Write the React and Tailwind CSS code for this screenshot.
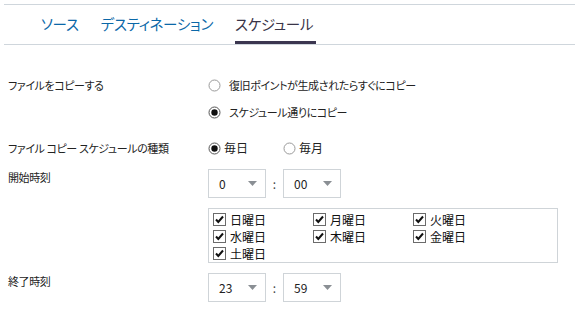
import { useState } from 'react';

const font = "font-['Noto_Sans_CJK_JP','Noto_Sans',sans-serif] [font-feature-settings:'palt']";

function Radio({ checked, label, onClick, small }) {
  return (
    <label className="flex items-center h-[24px] cursor-pointer" onClick={onClick}>
      <svg width="13" height="13" viewBox="0 0 13 13" className="shrink-0">
        <circle cx="6.5" cy="6.5" r="5.5" fill="#fff" stroke={checked ? '#555' : '#9a9a9a'} strokeWidth="1" />
        {checked && <circle cx="6.5" cy="6.5" r="3.2" fill="#111" />}
      </svg>
      <span className={`text-[#222] leading-none ${small ? 'ml-[8px] text-[11px] tracking-[-0.4px]' : 'ml-[3px] text-[12px]'}`}>{label}</span>
    </label>
  );
}

function Check({ label }) {
  return (
    <div className="flex items-center h-[17px] w-[100px]">
      <svg width="13" height="13" viewBox="0 0 13 13" className="shrink-0">
        <rect x="0.5" y="0.5" width="12" height="12" fill="#fff" stroke="#6b6b6b" />
        <path d="M3 6.5 L5.3 9 L10 3.5" fill="none" stroke="#111" strokeWidth="2" />
      </svg>
      <span className="ml-[4px] text-[12px] text-[#111] leading-none">{label}</span>
    </div>
  );
}

function Select({ value }) {
  return (
    <div className="flex items-center justify-between w-[58px] h-[29px] border border-[#cfd4d8] bg-white pl-[10px] pr-[8px]">
      <span className="text-[12px] text-[#222] leading-none">{value}</span>
      <svg width="9" height="5" viewBox="0 0 9 5">
        <path d="M0 0 H9 L4.5 5 Z" fill="#8a8f94" />
      </svg>
    </div>
  );
}

function TimePick({ h, m }) {
  return (
    <div className="flex items-center">
      <Select value={h} />
      <span className="w-[17px] text-center text-[12px] text-[#444] leading-none">:</span>
      <Select value={m} />
    </div>
  );
}

function Label({ children, top }) {
  return (
    <div className={`w-[200px] text-[11px] tracking-[-0.4px] text-[#222] leading-none ${top ? 'pt-[3px]' : 'h-[24px] flex items-center'}`}>
      {children}
    </div>
  );
}

export default function App() {
  const [mode, setMode] = useState('schedule');
  const [freq, setFreq] = useState('daily');
  const days = ['日曜日', '月曜日', '火曜日', '水曜日', '木曜日', '金曜日', '土曜日'];

  return (
    <div className={`w-[575px] h-[315px] bg-white ${font}`}>
      <div className="pt-[4px] pl-[4px]">
        <div className="flex items-end h-[41px] border-y border-[#cfd6dc] pl-[37px] gap-[22px]">
          <div className="pb-[13px] text-[14.5px] tracking-[-0.3px] text-[#0b68a8] leading-none">ソース</div>
          <div className="pb-[13px] text-[14.5px] tracking-[-0.3px] text-[#0b68a8] leading-none">デスティネーション</div>
          <div className="pb-[10px] pr-[3px] text-[14.5px] tracking-[-0.3px] text-[#3a3548] leading-none border-b-[3px] border-[#3b3650]">スケジュール</div>
        </div>
      </div>

      <div className="pl-[8px] pt-[28px]">
        <div className="flex">
          <Label>ファイルをコピーする</Label>
          <div className="flex flex-col gap-[3px]">
            <Radio small checked={mode === 'now'} label="復旧ポイントが生成されたらすぐにコピー" onClick={() => setMode('now')} />
            <Radio small checked={mode === 'schedule'} label="スケジュール通りにコピー" onClick={() => setMode('schedule')} />
          </div>
        </div>

        <div className="flex mt-[12px]">
          <Label>ファイル コピー スケジュールの種類</Label>
          <div className="flex gap-[35px]">
            <Radio checked={freq === 'daily'} label="毎日" onClick={() => setFreq('daily')} />
            <Radio checked={freq === 'monthly'} label="毎月" onClick={() => setFreq('monthly')} />
          </div>
        </div>

        <div className="flex mt-[9px]">
          <Label top>開始時刻</Label>
          <div className="flex flex-col">
            <TimePick h="0" m="00" />
            <div className="mt-[10px] w-[350px] h-[55px] border border-[#cfd4d8] pl-[4px] pt-[2px] grid grid-cols-[100px_100px_100px]">
              {days.map((d) => (
                <Check key={d} label={d} />
              ))}
            </div>
          </div>
        </div>

        <div className="flex mt-[10px]">
          <Label top>終了時刻</Label>
          <TimePick h="23" m="59" />
        </div>
      </div>
    </div>
  );
}
